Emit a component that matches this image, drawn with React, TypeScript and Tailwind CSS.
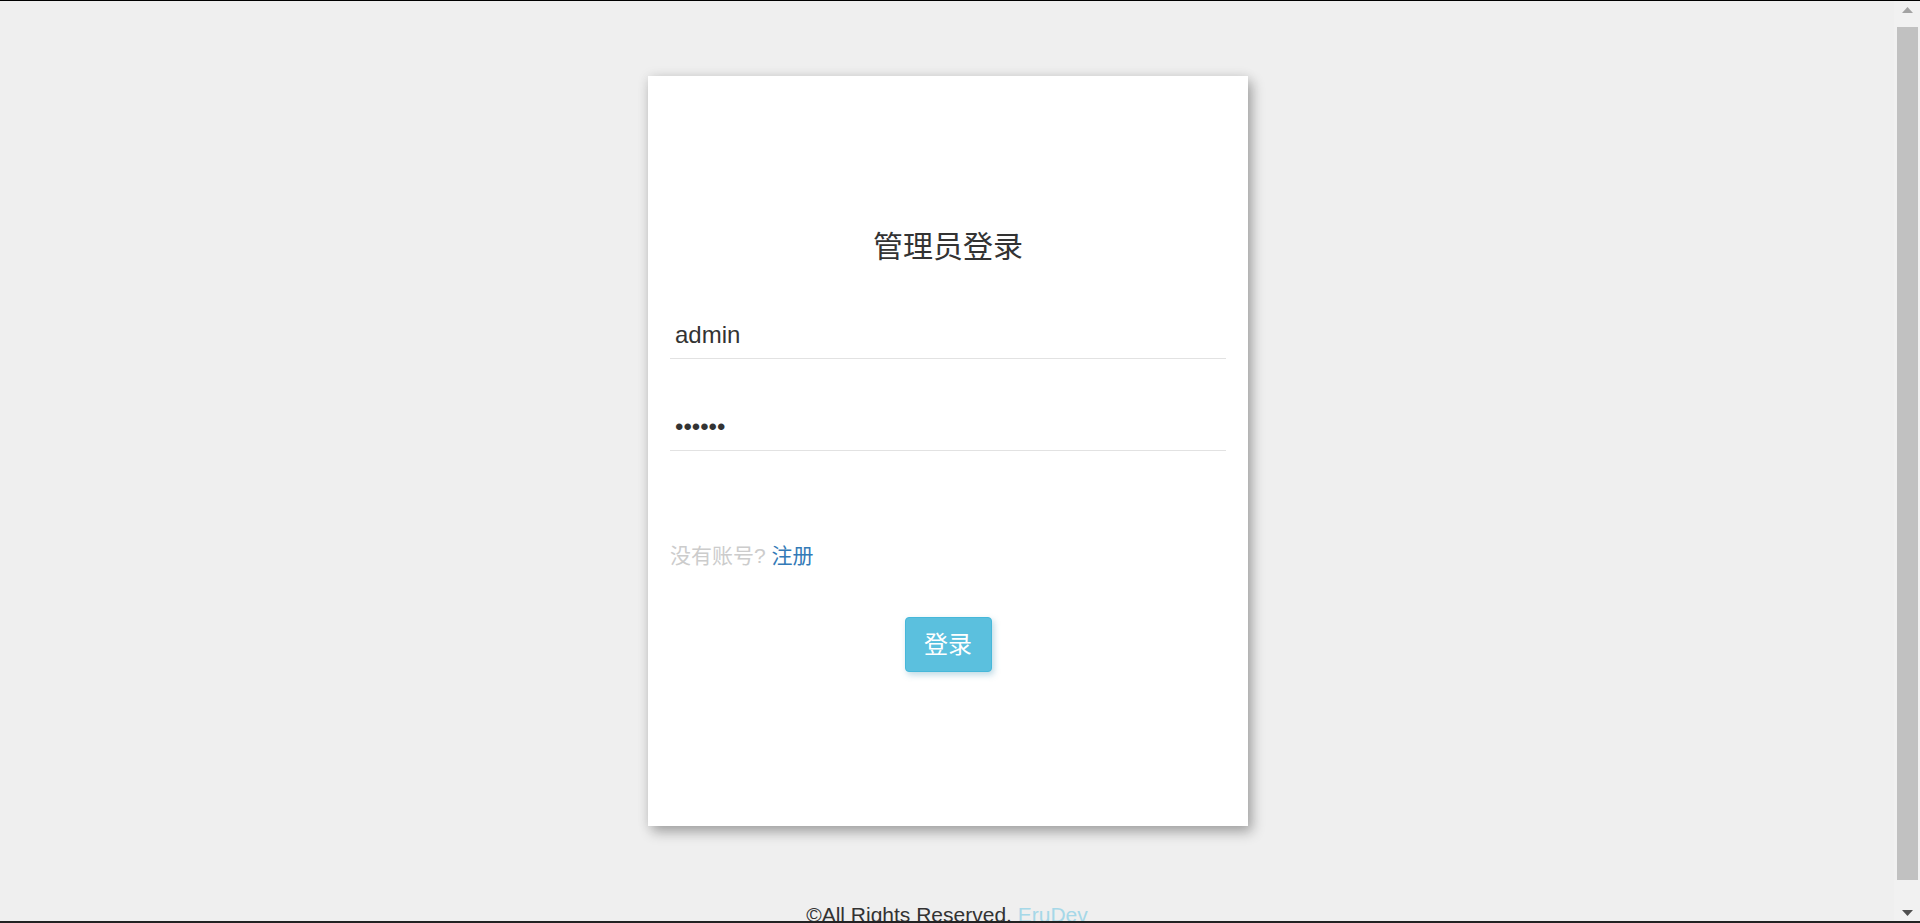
import { useState } from 'react'

const font = { fontFamily: '"Liberation Sans", Arial, "Noto Sans CJK SC", sans-serif' }

const ScrollBar = () => (
  <div className="w-[26px] shrink-0 bg-[#f1f1f1] flex flex-col items-center">
    <div className="h-[17px] w-full flex items-center justify-center">
      <svg width="11" height="6" viewBox="0 0 11 6">
        <path d="M5.5 0 L11 6 L0 6 Z" fill="#a3a3a3" />
      </svg>
    </div>
    <div className="mt-[9px] h-[853px] w-[21px] ml-[1px] bg-[#c1c1c1]" />
    <div className="flex-1" />
    <div className="h-[17px] w-full flex items-center justify-center">
      <svg width="11" height="6" viewBox="0 0 11 6">
        <path d="M0 0 L11 0 L5.5 6 Z" fill="#505050" />
      </svg>
    </div>
  </div>
)

const LoginCard = () => {
  const [user, setUser] = useState('admin')
  const [pass, setPass] = useState('123456')

  return (
    <div className="w-[600px] h-[750px] bg-white shadow-[4px_6px_12px_rgba(0,0,0,0.3),0_0_12px_rgba(0,0,0,0.08)] pt-[154px] px-[22px] flex flex-col">
      <h3 className="text-center text-[30px] leading-[33px] text-[#333]">管理员登录</h3>

      <input
        value={user}
        onChange={(e) => setUser(e.target.value)}
        className="mt-[49px] h-[47px] w-full border-b border-[#e2e2e2] pl-[5px] text-[24px] text-[#333] outline-none"
        style={font}
      />
      <input
        type="password"
        value={pass}
        onChange={(e) => setPass(e.target.value)}
        className="mt-[45px] h-[47px] w-full border-b border-[#e2e2e2] pl-[5px] text-[24px] text-[#333] outline-none"
        style={font}
      />

      <p className="mt-[91px] text-[21px] leading-[28px] text-[#cccccc]">
        没有账号? <a href="#" className="text-[#337ab7]">注册</a>
      </p>

      <div className="mt-[47px] flex justify-center">
        <button className="w-[87px] h-[55px] rounded-[4px] border border-[#46b8da] bg-[#5bc0de] text-white text-[24px] shadow-[2px_3px_6px_rgba(70,150,180,0.35)]">
          登录
        </button>
      </div>
    </div>
  )
}

export default function App() {
  return (
    <div
      className="h-[923px] w-[1920px] overflow-hidden flex flex-col bg-[#efefef]"
      style={{ fontFamily: '"Liberation Sans", Arial, "Noto Sans CJK SC", sans-serif' }}
    >
      <div className="h-px bg-black shrink-0" />
      <div className="flex flex-1 min-h-0">
        <main className="flex-1 flex flex-col items-center overflow-hidden">
          <div className="mt-[75px] ml-[2px]">
            <LoginCard />
          </div>
          <footer className="mt-[77px] text-[21px] leading-[24px] text-[#333] whitespace-nowrap">
            ©All Rights Reserved. <a href="#" className="text-[#a6d8e8]">EruDev</a>
          </footer>
        </main>
        <ScrollBar />
      </div>
      <div className="h-[2px] bg-[#222] shrink-0" />
    </div>
  )
}
